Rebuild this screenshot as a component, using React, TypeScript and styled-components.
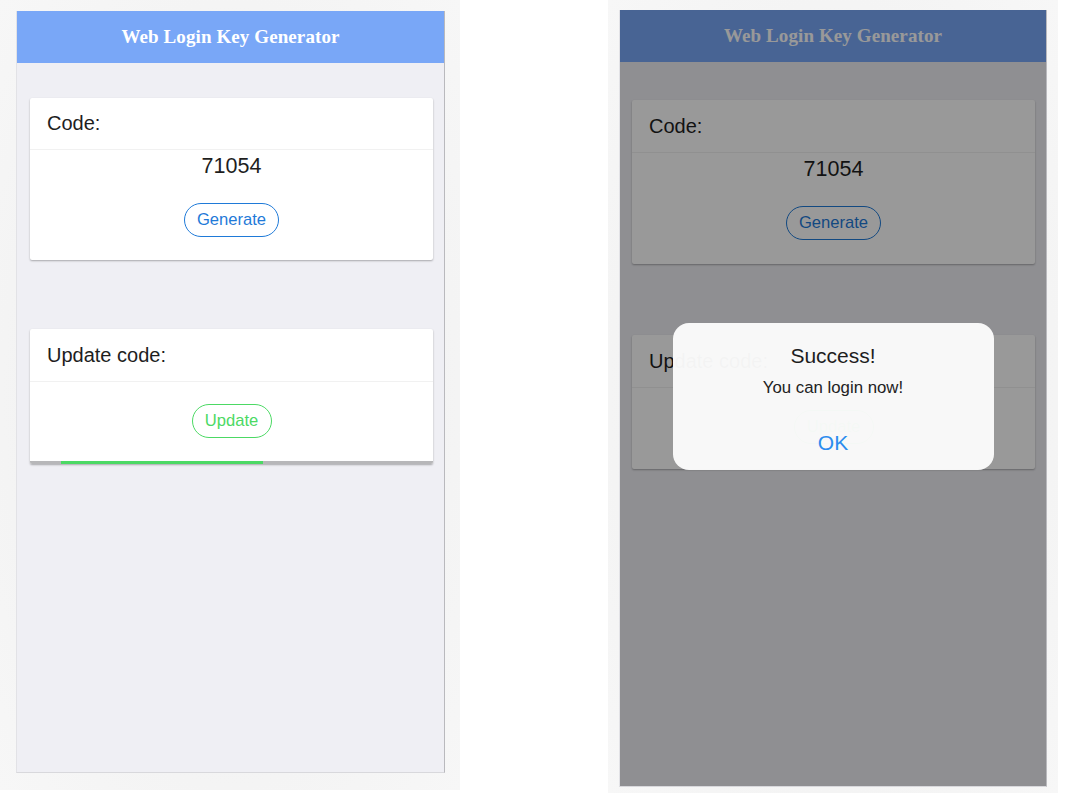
import React from "react";
import styled, { createGlobalStyle } from "styled-components";

const Global = createGlobalStyle`
  html, body { margin: 0; padding: 0; background: #ffffff; }
  body { font-family: "Liberation Sans", Arial, sans-serif; }
`;

const Page = styled.div`
  display: flex;
  align-items: flex-start;
  width: 1067px;
  height: 794px;
  gap: 148px;
`;

const Panel = styled.div<{ $w: number; $h: number; $pad: string }>`
  box-sizing: border-box;
  width: ${(p) => p.$w}px;
  height: ${(p) => p.$h}px;
  padding: ${(p) => p.$pad};
  background: radial-gradient(ellipse at center, #f0f0f0 0%, #f3f3f3 60%, #f7f7f7 100%);
  display: flex;
`;

const Phone = styled.div`
  position: relative;
  flex: 1;
  display: flex;
  flex-direction: column;
  background: #efeff4;
  border-left: 1px solid #e2e2e6;
  border-right: 1px solid #b9b9bd;
  border-bottom: 1px solid #d8d8dc;
  overflow: hidden;
`;

const Header = styled.div`
  height: 52px;
  flex: none;
  background: #79a7f7;
  display: flex;
  align-items: center;
  justify-content: center;
  color: #ffffff;
  font-family: "Liberation Serif", "DejaVu Serif", serif;
  font-weight: bold;
  font-size: 19px;
  letter-spacing: 0.1px;
`;

const Content = styled.div<{ $top: number; $gap: number; $left: number }>`
  display: flex;
  flex-direction: column;
  padding: ${(p) => p.$top}px 11px 0 ${(p) => p.$left}px;
  gap: ${(p) => p.$gap}px;
`;

const Card = styled.div`
  position: relative;
  background: #ffffff;
  border-radius: 2px;
  box-shadow: 0 1px 2px rgba(0, 0, 0, 0.3);
  overflow: hidden;
`;

const CardHeader = styled.div<{ $h: number }>`
  height: ${(p) => p.$h}px;
  display: flex;
  align-items: center;
  padding-left: 17px;
  font-size: 20px;
  color: #1e1e1e;
  border-bottom: 1px solid #f1f1f1;
`;

const CardBody = styled.div<{ $pt: number; $pb: number }>`
  display: flex;
  flex-direction: column;
  align-items: center;
  padding: ${(p) => p.$pt}px 0 ${(p) => p.$pb}px;
`;

const CodeValue = styled.div`
  font-size: 21.5px;
  line-height: 24px;
  color: #1e1e1e;
  margin-bottom: 25px;
`;

const PillButton = styled.button<{ $color: string; $w: number }>`
  box-sizing: border-box;
  width: ${(p) => p.$w}px;
  height: 34px;
  border: 1px solid ${(p) => p.$color};
  border-radius: 17px;
  background: transparent;
  color: ${(p) => p.$color};
  font-family: "Liberation Sans", Arial, sans-serif;
  font-size: 16.6px;
  padding: 0;
  cursor: pointer;
`;

const Progress = styled.div`
  height: 3px;
  background: #b7b7b9;
  display: flex;
`;

const ProgressFill = styled.div`
  height: 100%;
  background: #4cd964;
`;

const Overlay = styled.div`
  position: absolute;
  inset: 0;
  background: rgba(0, 0, 0, 0.4);
  display: flex;
  align-items: center;
  justify-content: center;
`;

const Modal = styled.div`
  width: 321px;
  height: 147px;
  box-sizing: border-box;
  margin-bottom: 3px;
  background: rgba(252, 252, 252, 0.965);
  border-radius: 16px;
  display: flex;
  flex-direction: column;
  align-items: center;
  padding-top: 21px;
`;

const ModalTitle = styled.div`
  font-size: 21px;
  line-height: 24px;
  color: #1e1e1e;
`;

const ModalText = styled.div`
  font-size: 16.8px;
  line-height: 20px;
  color: #222222;
  margin-top: 10px;
`;

const ModalOk = styled.div`
  font-size: 21px;
  line-height: 24px;
  color: #2b8cee;
  margin-top: 33px;
`;

type ScreenProps = {
  top: number;
  gap: number;
  left: number;
  dimmed?: boolean;
};

function Screen({ top, gap, left, dimmed }: ScreenProps) {
  return (
    <Phone>
      <Header>Web Login Key Generator</Header>
      <Content $top={top} $gap={gap} $left={left}>
        <Card>
          <CardHeader $h={dimmed ? 52 : 51}>Code:</CardHeader>
          <CardBody $pt={4} $pb={dimmed ? 24 : 23}>
            <CodeValue>71054</CodeValue>
            <PillButton $color="#1f7ad8" $w={95}>Generate</PillButton>
          </CardBody>
        </Card>
        <Card>
          <CardHeader $h={52}>Update code:</CardHeader>
          <CardBody $pt={22} $pb={dimmed ? 25 : 23}>
            <PillButton $color="#4cd964" $w={80}>Update</PillButton>
          </CardBody>
          {!dimmed && (
            <Progress>
              <ProgressFill style={{ marginLeft: "31px", width: "202px" }} />
            </Progress>
          )}
        </Card>
      </Content>
      {dimmed && (
        <Overlay>
          <Modal>
            <ModalTitle>Success!</ModalTitle>
            <ModalText>You can login now!</ModalText>
            <ModalOk>OK</ModalOk>
          </Modal>
        </Overlay>
      )}
    </Phone>
  );
}

export default function App() {
  return (
    <>
      <Global />
      <Page>
        <Panel $w={460} $h={790} $pad="11px 15px 17px 16px">
          <Screen top={35} gap={69} left={13} />
        </Panel>
        <Panel $w={450} $h={793} $pad="10px 11px 6px 11px">
          <Screen top={38} gap={71} left={12} dimmed />
        </Panel>
      </Page>
    </>
  );
}
